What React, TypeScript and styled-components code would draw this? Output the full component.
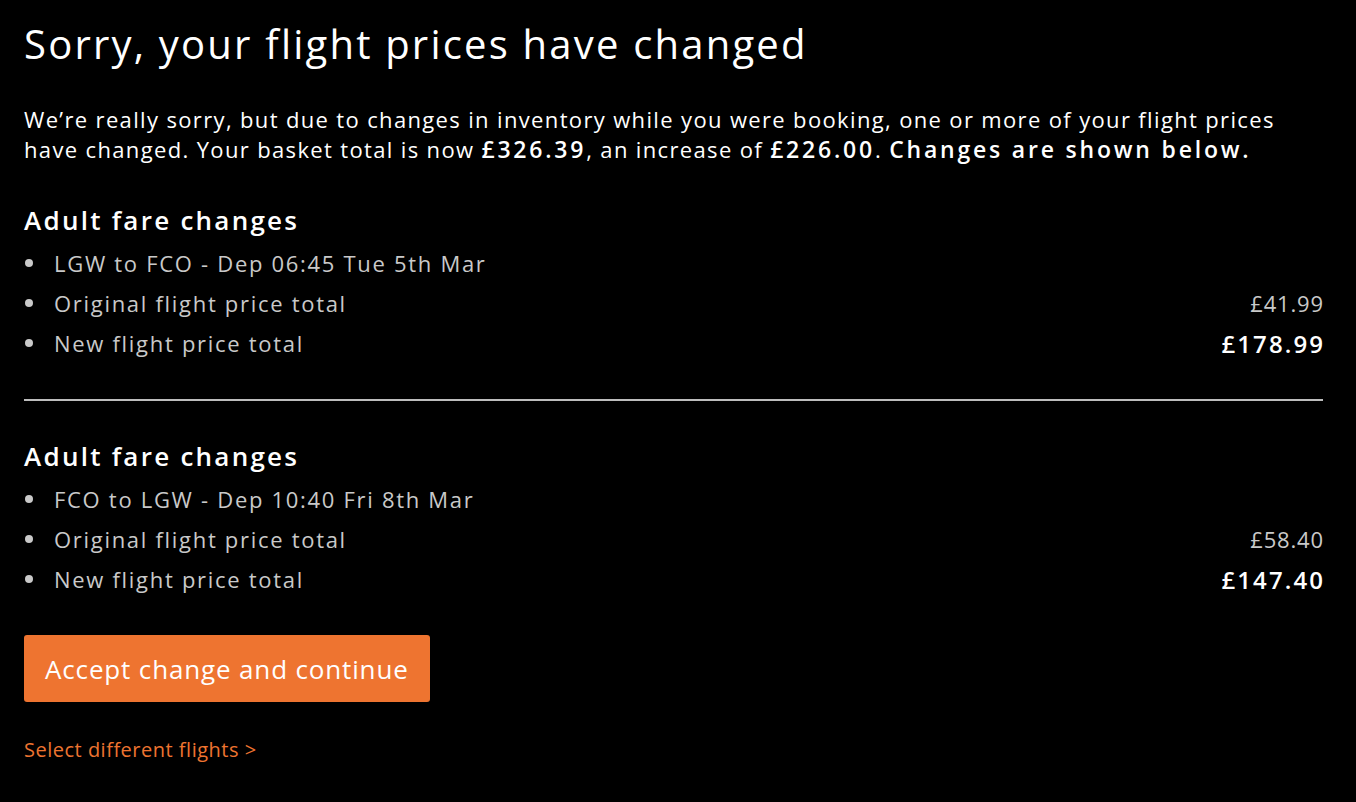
import React from 'react'
import styled, { createGlobalStyle } from 'styled-components'

const GlobalStyle = createGlobalStyle`
  html, body {
    margin: 0;
    padding: 0;
    background: #000;
  }
  body {
    font-family: "Open Sans", Lato, sans-serif;
    color: #fff;
  }
`

const StyledPage = styled.div`
  width: 1299px;
  padding: 18px 24px 40px;
`

const StyledTitle = styled.h1`
  margin: 0;
  font-size: 40px;
  font-weight: 400;
  line-height: 52px;
  letter-spacing: 2.2px;
`

const StyledIntro = styled.p`
  margin: 34px 0 0;
  font-size: 22px;
  line-height: 30px;
  letter-spacing: 1.35px;
  white-space: nowrap;

  strong {
    font-size: 23px;
    font-weight: 600;
    letter-spacing: 2.8px;
  }
`

const StyledSection = styled.section`
  padding: 39px 0 0;
`

const StyledHeading = styled.h2`
  margin: 0;
  font-size: 26px;
  font-weight: 600;
  line-height: 34px;
  letter-spacing: 2.25px;
`

const StyledList = styled.ul`
  list-style: none;
  margin: 6px 0 0;
  padding: 0;
`

const StyledItem = styled.li`
  display: flex;
  justify-content: space-between;
  align-items: center;
  height: 40px;
  font-size: 22px;
  letter-spacing: 1.7px;
  color: #c9c9c9;

  &::before {
    content: '';
    width: 8px;
    height: 8px;
    border-radius: 50%;
    background: #c9c9c9;
    margin: 0 21px 0 1px;
    flex: none;
  }
`

const StyledLabel = styled.span`
  flex: 1;
`

const StyledPrice = styled.span<{ $bold?: boolean }>`
  font-size: ${(p) => (p.$bold ? '24px' : '22px')};
  font-weight: ${(p) => (p.$bold ? 600 : 400)};
  color: ${(p) => (p.$bold ? '#fff' : '#c9c9c9')};
  letter-spacing: ${(p) => (p.$bold ? '2.1px' : '0.8px')};
  margin-right: ${(p) => (p.$bold ? '-2.1px' : '-0.8px')};
`

const StyledDivider = styled.hr`
  margin: 36px 0 -1px;
  border: none;
  border-top: 2px solid #bdbdbd;
`

const StyledButton = styled.button`
  margin-top: 36px;
  height: 67px;
  padding: 0 21px;
  border: none;
  border-radius: 3px;
  background: #ee7430;
  color: #fff;
  font-family: inherit;
  font-size: 26px;
  letter-spacing: 0.85px;
  cursor: pointer;
`

const StyledLink = styled.a`
  display: block;
  margin-top: 34px;
  color: #ee7430;
  font-size: 20px;
  letter-spacing: 0.5px;
  text-decoration: none;
`

type Fare = {
  route: string
  original: string
  updated: string
}

const fares: Fare[] = [
  { route: 'LGW to FCO - Dep 06:45 Tue 5th Mar', original: '£41.99', updated: '£178.99' },
  { route: 'FCO to LGW - Dep 10:40 Fri 8th Mar', original: '£58.40', updated: '£147.40' }
]

const FareSection: React.FC<{ fare: Fare }> = ({ fare }) => (
  <StyledSection>
    <StyledHeading>Adult fare changes</StyledHeading>
    <StyledList>
      <StyledItem>
        <StyledLabel>{fare.route}</StyledLabel>
      </StyledItem>
      <StyledItem>
        <StyledLabel>Original flight price total</StyledLabel>
        <StyledPrice>{fare.original}</StyledPrice>
      </StyledItem>
      <StyledItem>
        <StyledLabel>New flight price total</StyledLabel>
        <StyledPrice $bold>{fare.updated}</StyledPrice>
      </StyledItem>
    </StyledList>
  </StyledSection>
)

export default function App() {
  return (
    <>
      <GlobalStyle />
      <StyledPage>
        <StyledTitle>Sorry, your flight prices have changed</StyledTitle>
        <StyledIntro>
          We’re really sorry, but due to changes in inventory while you were booking, one or more of your flight
          prices
          <br />
          have changed. Your basket total is now <strong>£326.39</strong>, an increase of{' '}
          <strong>£226.00</strong>. <strong>Changes are shown below.</strong>
        </StyledIntro>
        <FareSection fare={fares[0]} />
        <StyledDivider />
        <FareSection fare={fares[1]} />
        <StyledButton>Accept change and continue</StyledButton>
        <StyledLink href="#">Select different flights &gt;</StyledLink>
      </StyledPage>
    </>
  )
}
